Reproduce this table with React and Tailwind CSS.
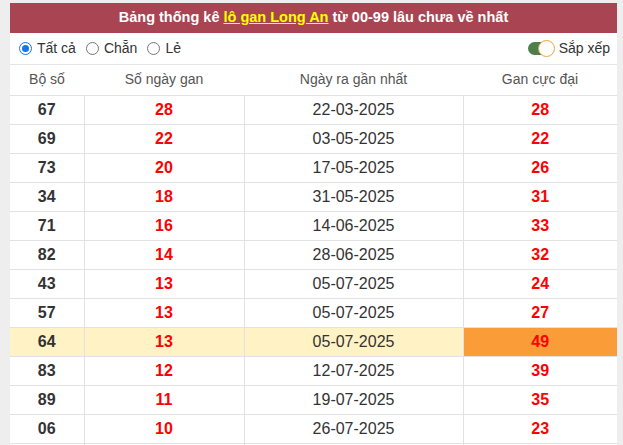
import React from 'react';

const rows = [
  ['67', '28', '22-03-2025', '28'],
  ['69', '22', '03-05-2025', '22'],
  ['73', '20', '17-05-2025', '26'],
  ['34', '18', '31-05-2025', '31'],
  ['71', '16', '14-06-2025', '33'],
  ['82', '14', '28-06-2025', '32'],
  ['43', '13', '05-07-2025', '24'],
  ['57', '13', '05-07-2025', '27'],
  ['64', '13', '05-07-2025', '49', true],
  ['83', '12', '12-07-2025', '39'],
  ['89', '11', '19-07-2025', '35'],
  ['06', '10', '26-07-2025', '23'],
  ['', '', '', ''],
];

const Radio = ({ checked, label }) => (
  <label className="flex items-center gap-[5px]">
    <span
      className={`w-[13px] h-[13px] rounded-full border flex items-center justify-center ${
        checked ? 'border-[#1a73e8]' : 'border-[#767676]'
      }`}
    >
      {checked && <span className="w-[7px] h-[7px] rounded-full bg-[#1a73e8]" />}
    </span>
    <span>{label}</span>
  </label>
);

export default function App() {
  return (
    <div className="h-[445px] overflow-hidden bg-[#eeeeee] pl-[10px] pt-[3px] font-['Liberation_Sans',Arial,sans-serif]">
      <div className="w-[607px] bg-white">
        <div className="h-[30px] bg-[#a94553] flex items-center justify-center text-white font-bold text-[14.5px]">
          Bảng thống kê&nbsp;
          <span className="text-[#ffff00] underline">lô gan Long An</span>
          &nbsp;từ 00-99 lâu chưa về nhất
        </div>

        <div className="h-[32px] flex items-center justify-between pl-[9px] pr-[7px] text-[14px] text-[#333] border-b border-[#e5e5e5]">
          <div className="flex items-center gap-[10px]">
            <Radio checked label="Tất cả" />
            <Radio label="Chẵn" />
            <Radio label="Lẻ" />
          </div>
          <div className="flex items-center gap-[4px]">
            <span className="relative w-[27px] h-[17px] flex items-center">
              <span className="w-[20px] h-[13px] rounded-full bg-[#4d7f4d]" />
              <span className="absolute right-0 top-0 w-[17px] h-[17px] rounded-full bg-white border border-[#f0a040]" />
            </span>
            <span>Sắp xếp</span>
          </div>
        </div>

        <table className="w-full border-collapse text-[16px] table-fixed">
          <colgroup>
            <col className="w-[74px]" />
            <col className="w-[160px]" />
            <col className="w-[219px]" />
            <col className="w-[154px]" />
          </colgroup>
          <thead>
            <tr className="h-[30px] text-[14px] text-[#555] font-normal">
              <th className="font-normal">Bộ số</th>
              <th className="font-normal">Số ngày gan</th>
              <th className="font-normal">Ngày ra gần nhất</th>
              <th className="font-normal">Gan cực đại</th>
            </tr>
          </thead>
          <tbody>
            {rows.map(([bo, gan, date, max, hl], i) => (
              <tr key={i} className={`h-[29px] text-center ${hl ? 'bg-[#fff2c4]' : ''}`}>
                <td className="border border-l-0 border-[#e2e2e2] font-bold text-[#333]">{bo}</td>
                <td className="border border-[#e2e2e2] font-bold text-[#ff0000]">{gan}</td>
                <td className="border border-[#e2e2e2] text-[#333]">{date}</td>
                <td
                  className={`border border-r-0 border-[#e2e2e2] font-bold text-[#ff0000] ${
                    hl ? 'bg-[#fa9c38]' : 'bg-white'
                  }`}
                >
                  {max}
                </td>
              </tr>
            ))}
          </tbody>
        </table>
      </div>
    </div>
  );
}
